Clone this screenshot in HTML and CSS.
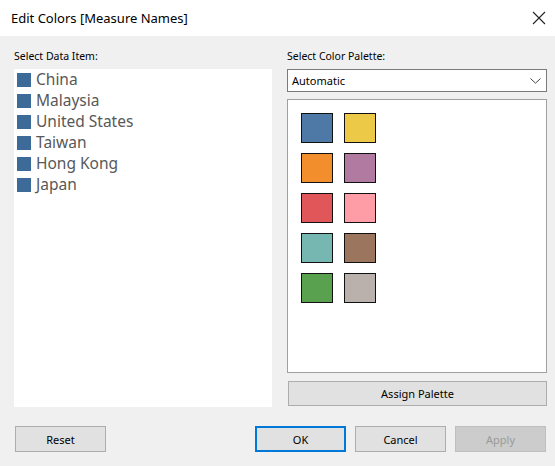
FILE: index.html
```html
<!DOCTYPE html>
<html>
<head>
<meta charset="utf-8">
<link rel="stylesheet" href="styles.css">
</head>
<body>
<div class="dialog">
  <div class="titlebar">
    <span class="title">Edit Colors [Measure Names]</span>
    <svg class="close" width="14" height="14" viewBox="0 0 14 14"><path d="M1 1 L13 13 M13 1 L1 13" stroke="#222" stroke-width="1.1" fill="none"/></svg>
  </div>
  <div class="main">
    <div class="col left">
      <div class="label">Select Data Item:</div>
      <ul class="list">
        <li class="item"><span class="sq"></span>China</li>
        <li class="item"><span class="sq"></span>Malaysia</li>
        <li class="item"><span class="sq"></span>United States</li>
        <li class="item"><span class="sq"></span>Taiwan</li>
        <li class="item"><span class="sq"></span>Hong Kong</li>
        <li class="item"><span class="sq"></span>Japan</li>
      </ul>
    </div>
    <div class="col right">
      <div class="label">Select Color Palette:</div>
      <div class="select">
        <span>Automatic</span>
        <svg width="11" height="6" viewBox="0 0 11 6"><path d="M0.5 0.5 L5.5 5.2 L10.5 0.5" stroke="#444" stroke-width="1" fill="none"/></svg>
      </div>
      <div class="palette">
        <div class="swatches">
          <span class="sw c1"></span><span class="sw c2"></span>
          <span class="sw c3"></span><span class="sw c4"></span>
          <span class="sw c5"></span><span class="sw c6"></span>
          <span class="sw c7"></span><span class="sw c8"></span>
          <span class="sw c9"></span><span class="sw c10"></span>
        </div>
      </div>
      <button class="btn assign">Assign Palette</button>
    </div>
  </div>
  <div class="footer">
    <button class="btn reset">Reset</button>
    <div class="actions">
      <button class="btn ok">OK</button>
      <button class="btn">Cancel</button>
      <button class="btn disabled">Apply</button>
    </div>
  </div>
</div>
</body>
</html>
```
FILE: styles.css
```css
* { box-sizing: border-box; }
html, body { margin: 0; padding: 0; }
body {
  width: 555px;
  height: 466px;
  background: #f0f0f0;
  font-family: "Segoe UI", "Noto Sans", "Open Sans", sans-serif;
  overflow: hidden;
}
.dialog { width: 555px; height: 466px; display: flex; flex-direction: column; }
.titlebar {
  height: 36px;
  background: #ffffff;
  display: flex;
  align-items: center;
  justify-content: space-between;
  padding: 0 10px 0 11px;
}
.title { font-size: 13px; color: #000; }
.close { margin-right: -1px; }
.main {
  display: flex;
  padding: 12px 8px 0 14px;
  gap: 15px;
}
.col { display: flex; flex-direction: column; }
.left { width: 258px; }
.right { width: 260px; }
.label {
  font-size: 10.5px;
  color: #000;
  height: 16px;
  line-height: 16px;
  margin-bottom: 5px;
}
.list {
  list-style: none;
  margin: 0;
  padding: 0;
  background: #fff;
  height: 338px;
}
.item {
  height: 21px;
  display: flex;
  align-items: center;
  padding-left: 3px;
  padding-bottom: 1px;
  font-size: 15.5px;
  color: #585858;
}
.sq {
  width: 14px;
  height: 14px;
  background: #3c6a99;
  margin-right: 5px;
  margin-top: 1px;
}
.select {
  height: 23px;
  background: #fff;
  border: 1px solid #7a7a7a;
  display: flex;
  align-items: center;
  justify-content: space-between;
  padding: 0 5px 0 4px;
  font-size: 11px;
  color: #000;
}
.palette {
  margin-top: 7px;
  height: 274px;
  background: #fff;
  border: 1px solid #a0a0a0;
  padding: 13px 0 0 13px;
}
.swatches {
  display: grid;
  grid-template-columns: 32px 32px;
  grid-auto-rows: 30px;
  column-gap: 11px;
  row-gap: 10px;
}
.sw { border: 1px solid #111; display: block; }
.c1 { background: #4e79a7; }
.c2 { background: #edc948; }
.c3 { background: #f28e2b; }
.c4 { background: #b07aa1; }
.c5 { background: #e15759; }
.c6 { background: #ff9da7; }
.c7 { background: #76b7b2; }
.c8 { background: #9c755f; }
.c9 { background: #59a14f; }
.c10 { background: #bab0ac; }
.btn {
  font-family: "Segoe UI", "Noto Sans", "Open Sans", sans-serif;
  font-size: 11px;
  color: #000;
  background: #e1e1e1;
  border: 1px solid #adadad;
  height: 26px;
  width: 91px;
  padding: 0;
}
.assign { width: 259px; height: 25px; margin-top: 8px; margin-left: 1px; }
.footer {
  display: flex;
  justify-content: space-between;
  padding: 19px 9px 0 15px;
}
.reset { width: 91px; }
.actions { display: flex; gap: 9px; }
.ok { border: 2px solid #0078d7; }
.disabled { background: #cccccc; border-color: #bfbfbf; color: #9a9a9a; }
```
